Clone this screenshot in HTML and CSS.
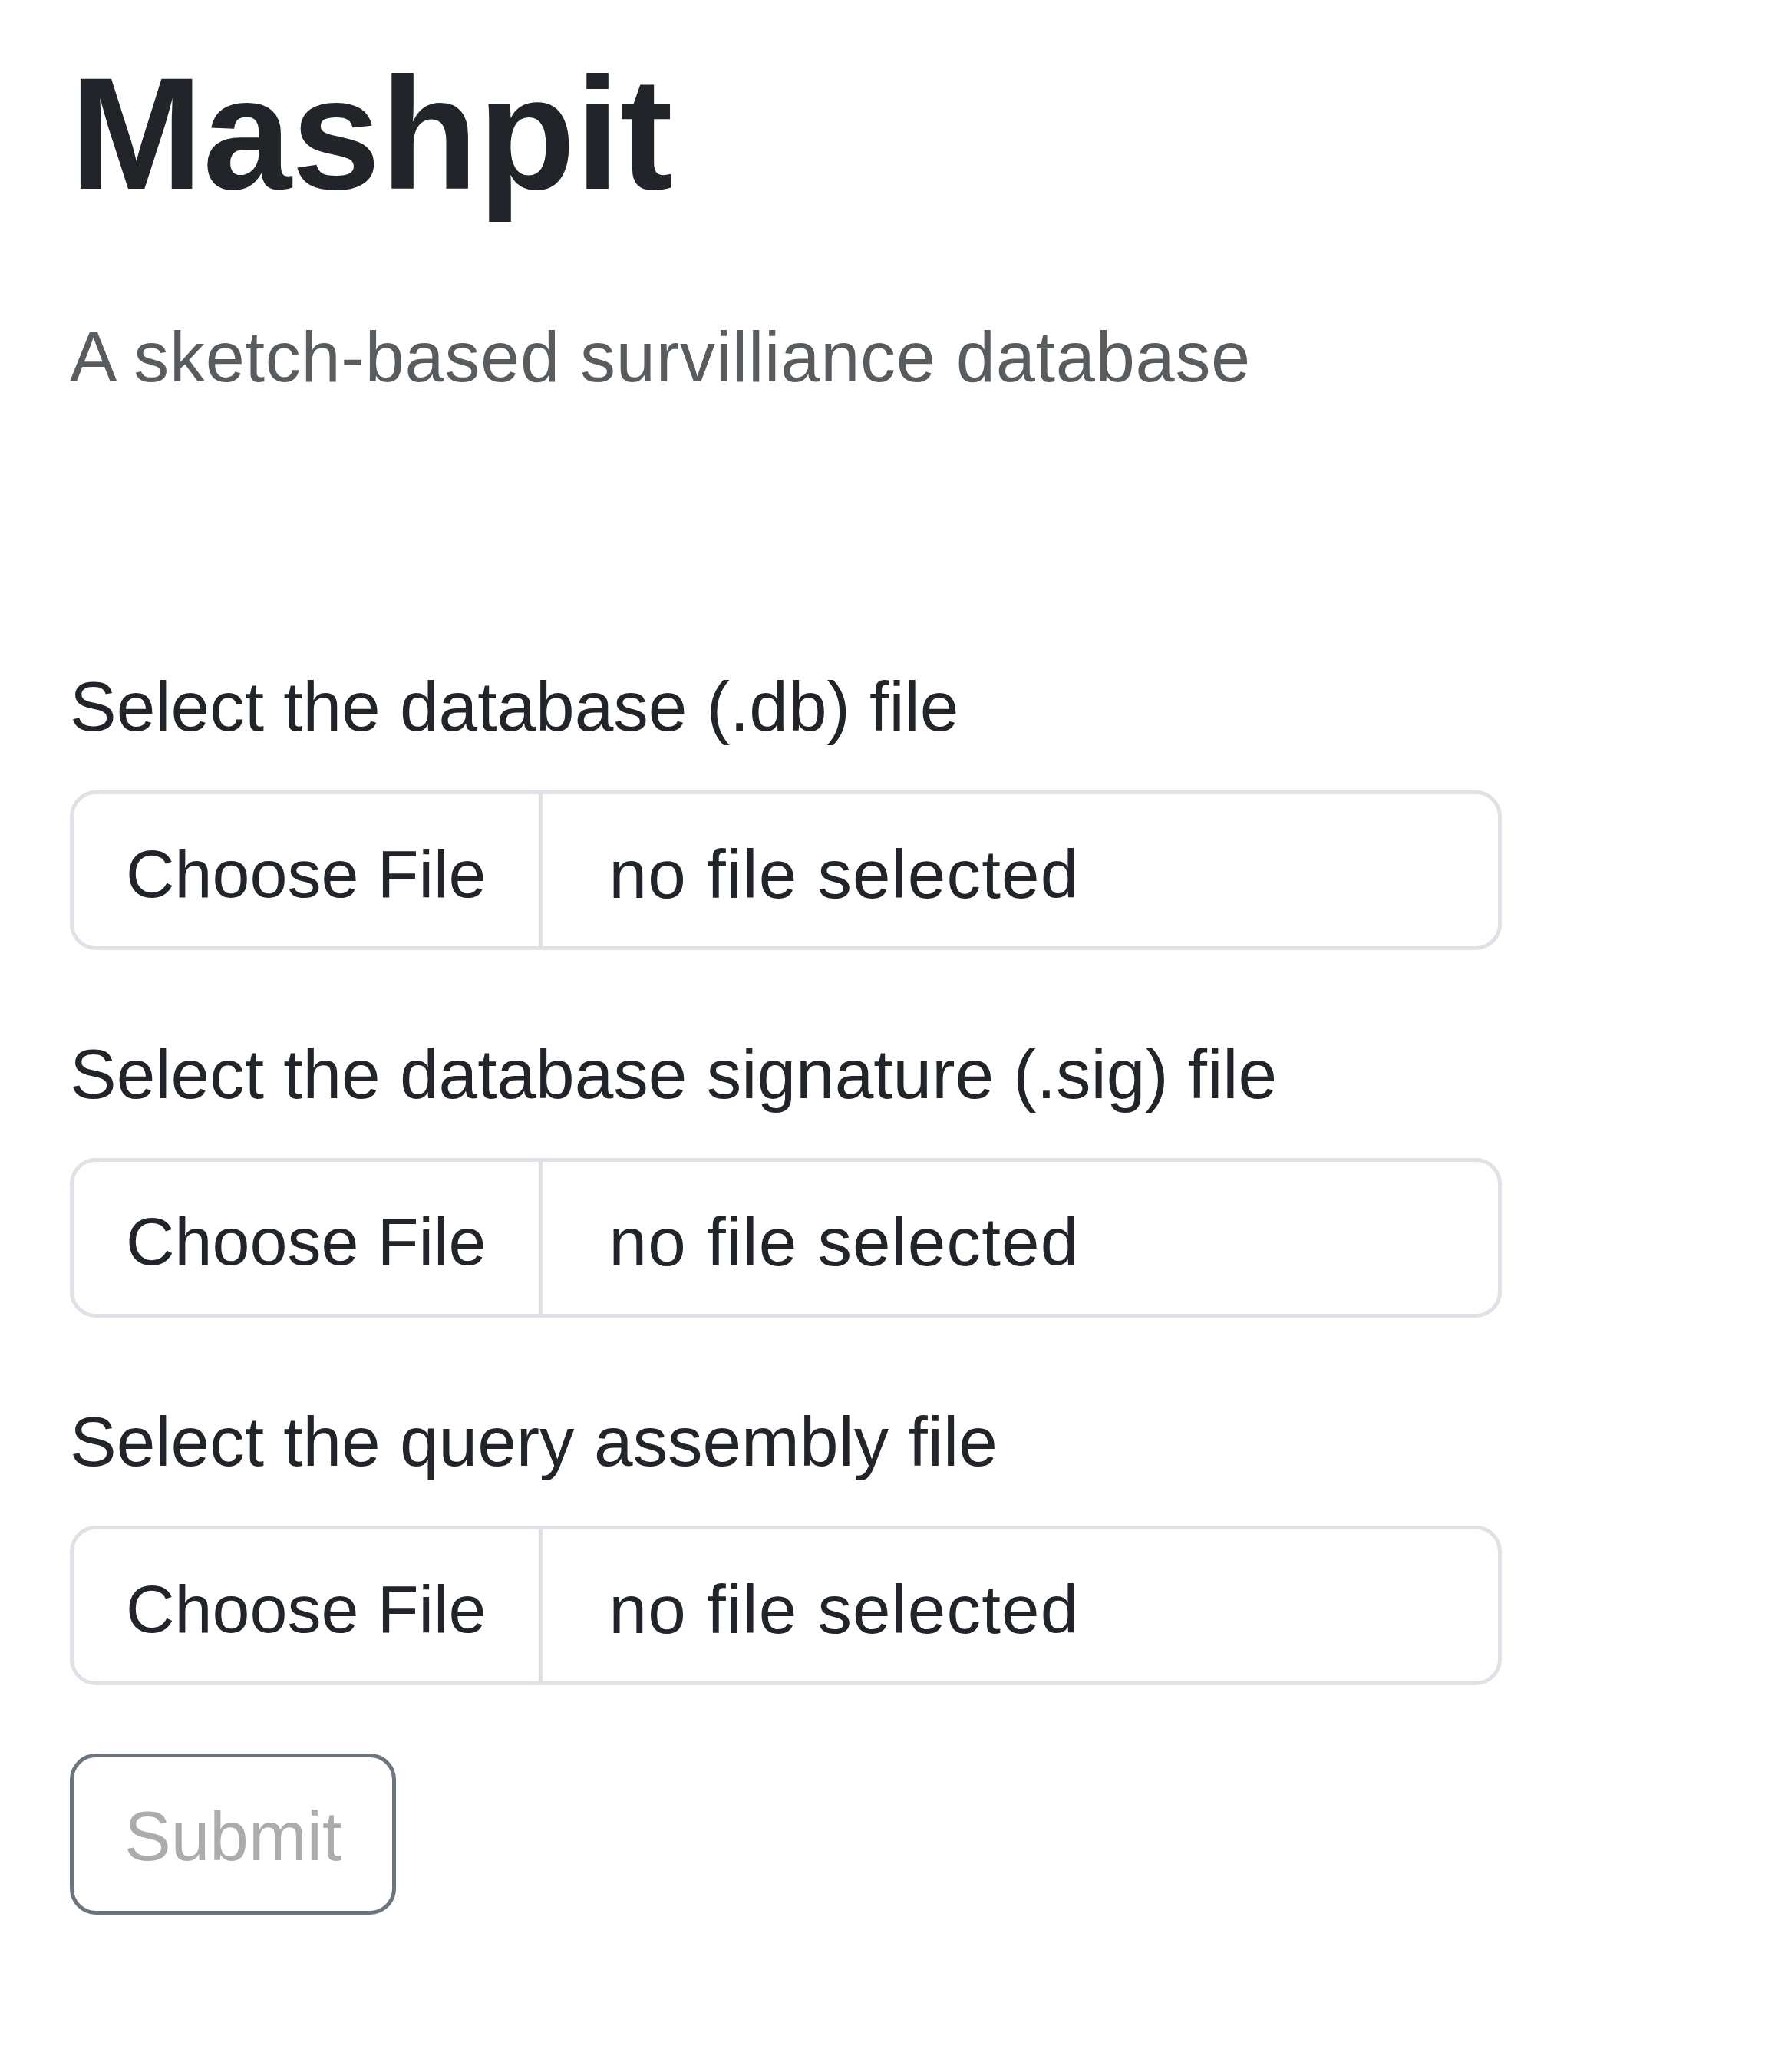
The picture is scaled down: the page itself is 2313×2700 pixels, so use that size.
FILE: index.html
```html
<!DOCTYPE html>
<html lang="en">
<head>
<meta charset="utf-8">
<title>Mashpit</title>
<link rel="stylesheet" href="styles.css">
</head>
<body>
<main class="page">
  <h1 class="title">Mashpit</h1>
  <p class="lead">A sketch-based survilliance database</p>
  <form class="upload-form">
    <div class="field">
      <label class="field-label">Select the database (.db) file</label>
      <div class="file-input">
        <span class="file-button">Choose File</span>
        <span class="file-name">no file selected</span>
      </div>
    </div>
    <div class="field">
      <label class="field-label">Select the database signature (.sig) file</label>
      <div class="file-input">
        <span class="file-button">Choose File</span>
        <span class="file-name">no file selected</span>
      </div>
    </div>
    <div class="field">
      <label class="field-label">Select the query assembly file</label>
      <div class="file-input">
        <span class="file-button">Choose File</span>
        <span class="file-name">no file selected</span>
      </div>
    </div>
    <button class="submit" type="button" disabled>Submit</button>
  </form>
</main>
</body>
</html>
```

FILE: styles.css
```css
html, body {
  margin: 0;
  padding: 0;
  background: #ffffff;
}

body {
  font-family: "Liberation Sans", Arial, Helvetica, sans-serif;
  color: #212529;
}

.page {
  padding: 49px 0 0 91px;
  width: 1866px;
}

.title {
  margin: 0;
  font-size: 208px;
  line-height: 251px;
  font-weight: 700;
  color: #212529;
}

.lead {
  margin: 96px 0 0 0;
  font-size: 92px;
  line-height: 138px;
  letter-spacing: 0.7px;
  color: rgba(33, 37, 41, 0.75);
}

.upload-form {
  margin-top: 318px;
  display: flex;
  flex-direction: column;
  align-items: flex-start;
}

.field {
  width: 100%;
  margin-bottom: 93px;
}

.field:last-of-type {
  margin-bottom: 89px;
}

.field-label {
  display: block;
  font-size: 91px;
  line-height: 138px;
  margin-bottom: 40px;
}

.file-input {
  box-sizing: border-box;
  display: flex;
  height: 208px;
  width: 100%;
  border: 5px solid #dee2e6;
  border-radius: 34px;
  background: #ffffff;
}

.file-button {
  padding: 10px 68px 0 68px;
  font-size: 88px;
  line-height: 188px;
  border-right: 5px solid #dee2e6;
  white-space: nowrap;
}

.file-name {
  padding-top: 10px;
  margin-left: 87px;
  font-size: 89px;
  line-height: 188px;
  letter-spacing: 1.2px;
  white-space: nowrap;
}

.submit {
  box-sizing: border-box;
  height: 210px;
  padding: 5px 66px 0 66px;
  border: 5px solid #6c757d;
  border-radius: 34px;
  background: #ffffff;
  font-family: "Liberation Sans", Arial, Helvetica, sans-serif;
  font-size: 91px;
  line-height: 195px;
  color: #acacac;
}
```
